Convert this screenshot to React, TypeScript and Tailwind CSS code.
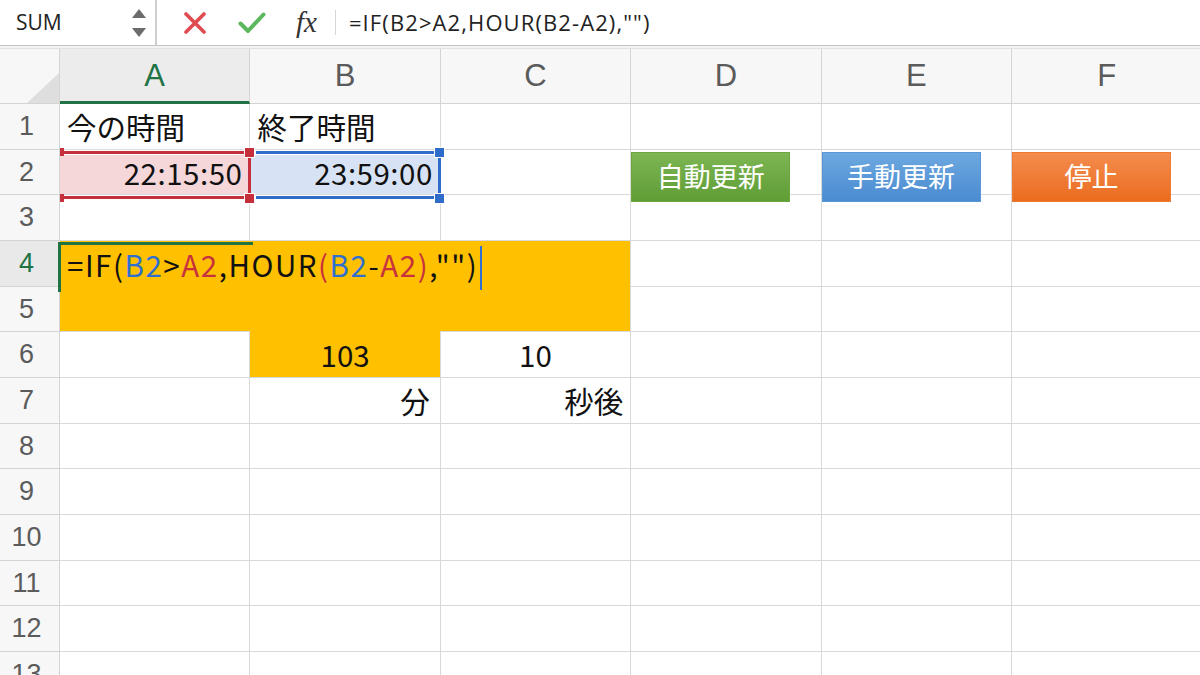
import type { ReactNode } from "react";

const COLS = ["A", "B", "C", "D", "E", "F"];
const ROWS = Array.from({ length: 13 }, (_, i) => i + 1);

const jp = "font-['Noto_Sans_CJK_JP',sans-serif]";
const gridLine = "border-r border-b border-[#d9d9d9]";

function Cell({ children, className = "" }: { children?: ReactNode; className?: string }) {
  return (
    <div
      className={`${gridLine} relative flex items-center whitespace-nowrap px-[7px] text-[29.5px] text-[#111] ${jp} ${className}`}
    >
      {children}
    </div>
  );
}

function SheetButton({ label, tone }: { label: string; tone: "green" | "blue" | "orange" }) {
  const tones = {
    green: "bg-gradient-to-b from-[#7db653] to-[#5f9d35] border-[#6aa83f]",
    blue: "bg-gradient-to-b from-[#6da8e0] to-[#4a8bd0] border-[#5896d6]",
    orange: "bg-gradient-to-b from-[#f48c4c] to-[#ea6c1c] border-[#ef7a33]",
  };
  return (
    <div
      className={`absolute left-0 top-[2px] z-10 flex h-[50px] w-[159px] items-center justify-center border text-[27px] text-white ${tones[tone]}`}
    >
      {label}
    </div>
  );
}

function Formula() {
  const blue = "text-[#2f6fd0]";
  const red = "text-[#c8323e]";
  return (
    <span className="flex items-center tracking-[1.55px]">
      <span>=IF(</span>
      <span className={blue}>B2</span>
      <span>&gt;</span>
      <span className={red}>A2</span>
      <span>,HOUR</span>
      <span className={red}>(</span>
      <span className={blue}>B2</span>
      <span>-</span>
      <span className={red}>A2</span>
      <span className={red}>)</span>
      <span>,"")</span>
      <span className="ml-[2px] inline-block h-[44px] w-[2px] translate-y-[4px] bg-[#2f6fd0]" />
    </span>
  );
}

function FormulaBar() {
  return (
    <div className="flex h-[46px] items-stretch border-b border-[#c4c4c4] bg-white">
      <div className="flex w-[157px] items-center justify-between border-r-2 border-[#cfcfcf] pl-[16px] pr-[9px]">
        <span className="font-['Open_Sans',sans-serif] text-[21px] text-[#222]">SUM</span>
        <div className="flex flex-col gap-[10px]">
          <svg width="14" height="9" viewBox="0 0 14 9">
            <path d="M7 0 L14 9 L0 9 Z" fill="#6b6b6b" />
          </svg>
          <svg width="14" height="9" viewBox="0 0 14 9">
            <path d="M0 0 L14 0 L7 9 Z" fill="#6b6b6b" />
          </svg>
        </div>
      </div>
      <div className="flex items-center pl-[27px]">
        <svg width="22" height="22" viewBox="0 0 22 22">
          <path d="M2 2 L20 20 M20 2 L2 20" stroke="#e04b4f" strokeWidth="3.6" strokeLinecap="round" />
        </svg>
        <svg className="ml-[32px]" width="28" height="22" viewBox="0 0 28 22">
          <path
            d="M2.5 11.5 L10 19 L25.5 2.5"
            stroke="#5cb85c"
            strokeWidth="4"
            fill="none"
            strokeLinecap="round"
            strokeLinejoin="round"
          />
        </svg>
        <span className="ml-[30px] font-['Liberation_Serif',serif] text-[29px] italic leading-none text-[#333]">
          fx
        </span>
        <div className="ml-[18px] h-[25px] w-px bg-[#d6d6d6]" />
        <span className="ml-[13px] font-['Open_Sans',sans-serif] text-[22px] tracking-[1.1px] text-[#222]">
          =IF(B2&gt;A2,HOUR(B2-A2),"")
        </span>
      </div>
    </div>
  );
}

export default function App() {
  const header = "bg-[#f7f7f7] text-[#5b5b5b] font-['Liberation_Sans',sans-serif]";

  return (
    <div className="relative h-[675px] w-[1200px] overflow-hidden bg-white">
      <FormulaBar />
      <div className="h-[3px] border-b border-[#e2e2e2] bg-[#f3f3f3]" />

      <div className="grid grid-cols-[60px_repeat(6,190.4px)] grid-rows-[55px_repeat(13,45.67px)]">
        {/* corner */}
        <div className={`${header} relative border-r border-b border-[#d4d4d4]`}>
          <svg className="absolute bottom-0 right-0" width="32" height="30" viewBox="0 0 32 30">
            <path d="M32 0 L32 30 L0 30 Z" fill="#dedede" />
          </svg>
        </div>
        {COLS.map((c) => (
          <div
            key={c}
            className={
              c === "A"
                ? "flex items-center justify-center border-r border-b-[3px] border-r-[#d4d4d4] border-b-[#217346] bg-[#ececec] pt-[3px] font-['Liberation_Sans',sans-serif] text-[31px] text-[#217346]"
                : `${header} flex items-center justify-center border-r border-b border-[#d4d4d4] text-[31px]`
            }
          >
            {c}
          </div>
        ))}

        {ROWS.map((r) => (
          <Row key={r} r={r} header={header} />
        ))}
      </div>

      {/* A2 range highlight (red) */}
      <div className="absolute left-[64px] top-[151px] h-[3px] w-[182px] bg-[#c5303c] shadow-[0_0_0_1px_white]" />
      <div className="absolute left-[64px] top-[196px] h-[3px] w-[182px] bg-[#c5303c] shadow-[0_0_0_1px_white]" />
      <div className="absolute left-[248px] top-[152px] h-[47px] w-[3px] bg-[#c5303c]" />
      <div className="absolute left-[60px] top-[148px] h-[8px] w-[4px] bg-[#c5303c]" />
      <div className="absolute left-[60px] top-[194px] h-[8px] w-[4px] bg-[#c5303c]" />
      <div className="absolute left-[245px] top-[148px] h-[9px] w-[9px] bg-[#c5303c] shadow-[0_0_0_1px_white]" />
      <div className="absolute left-[245px] top-[194px] h-[9px] w-[9px] bg-[#c5303c] shadow-[0_0_0_1px_white]" />

      {/* B2 range highlight (blue) */}
      <div className="absolute left-[256px] top-[151px] h-[3px] w-[180px] bg-[#2f6bc8] shadow-[0_0_0_1px_white]" />
      <div className="absolute left-[256px] top-[196px] h-[3px] w-[180px] bg-[#2f6bc8] shadow-[0_0_0_1px_white]" />
      <div className="absolute left-[438px] top-[152px] h-[47px] w-[3px] bg-[#2f6bc8]" />
      <div className="absolute left-[435px] top-[148px] h-[9px] w-[9px] bg-[#2f6bc8] shadow-[0_0_0_1px_white]" />
      <div className="absolute left-[435px] top-[194px] h-[9px] w-[9px] bg-[#2f6bc8] shadow-[0_0_0_1px_white]" />

      {/* active cell A4 */}
      <div className="absolute left-[58px] top-[242px] h-[3px] w-[195px] bg-[#217346]" />
      <div className="absolute left-[58px] top-[242px] h-[50px] w-[3px] bg-[#217346]" />
    </div>
  );
}

function Row({ r, header }: { r: number; header: string }) {
  const rowHead = (
    <div
      className={
        r === 4
          ? "flex items-center justify-center border-r border-b border-[#d4d4d4] bg-[#e9e9e9] pr-[6px] font-['Liberation_Sans',sans-serif] text-[27px] text-[#217346]"
          : `${header} flex items-center justify-center border-r border-b border-[#d4d4d4] pr-[6px] text-[27px]`
      }
    >
      {r}
    </div>
  );

  if (r === 1) {
    return (
      <>
        {rowHead}
        <Cell>今の時間</Cell>
        <Cell>終了時間</Cell>
        <Cell />
        <Cell />
        <Cell />
        <Cell />
      </>
    );
  }
  if (r === 2) {
    return (
      <>
        {rowHead}
        <Cell className="justify-end bg-[#f5d6d9] tracking-[0.5px]">22:15:50</Cell>
        <Cell className="justify-end bg-[#d7e3f5] tracking-[0.5px]">23:59:00</Cell>
        <Cell />
        <Cell>
          <SheetButton label="自動更新" tone="green" />
        </Cell>
        <Cell>
          <SheetButton label="手動更新" tone="blue" />
        </Cell>
        <Cell>
          <SheetButton label="停止" tone="orange" />
        </Cell>
      </>
    );
  }
  if (r === 4) {
    return (
      <>
        {rowHead}
        <div
          className={`col-span-3 row-span-2 border-r border-b border-[#d9d9d9] bg-[#ffc000] px-[7px] text-[29.5px] text-[#111] ${jp}`}
        >
          <div className="flex h-[45.67px] items-center whitespace-nowrap">
            <Formula />
          </div>
        </div>
        <Cell />
        <Cell />
        <Cell />
      </>
    );
  }
  if (r === 5) {
    return (
      <>
        {rowHead}
        <Cell />
        <Cell />
        <Cell />
      </>
    );
  }
  if (r === 6) {
    return (
      <>
        {rowHead}
        <Cell />
        <Cell className="mt-[-1px] justify-center bg-[#ffc000]">103</Cell>
        <Cell className="justify-center">10</Cell>
        <Cell />
        <Cell />
        <Cell />
      </>
    );
  }
  if (r === 7) {
    return (
      <>
        {rowHead}
        <Cell />
        <Cell className="justify-end pr-[10px]">分</Cell>
        <Cell className="justify-end">秒後</Cell>
        <Cell />
        <Cell />
        <Cell />
      </>
    );
  }
  return (
    <>
      {rowHead}
      <Cell />
      <Cell />
      <Cell />
      <Cell />
      <Cell />
      <Cell />
    </>
  );
}
